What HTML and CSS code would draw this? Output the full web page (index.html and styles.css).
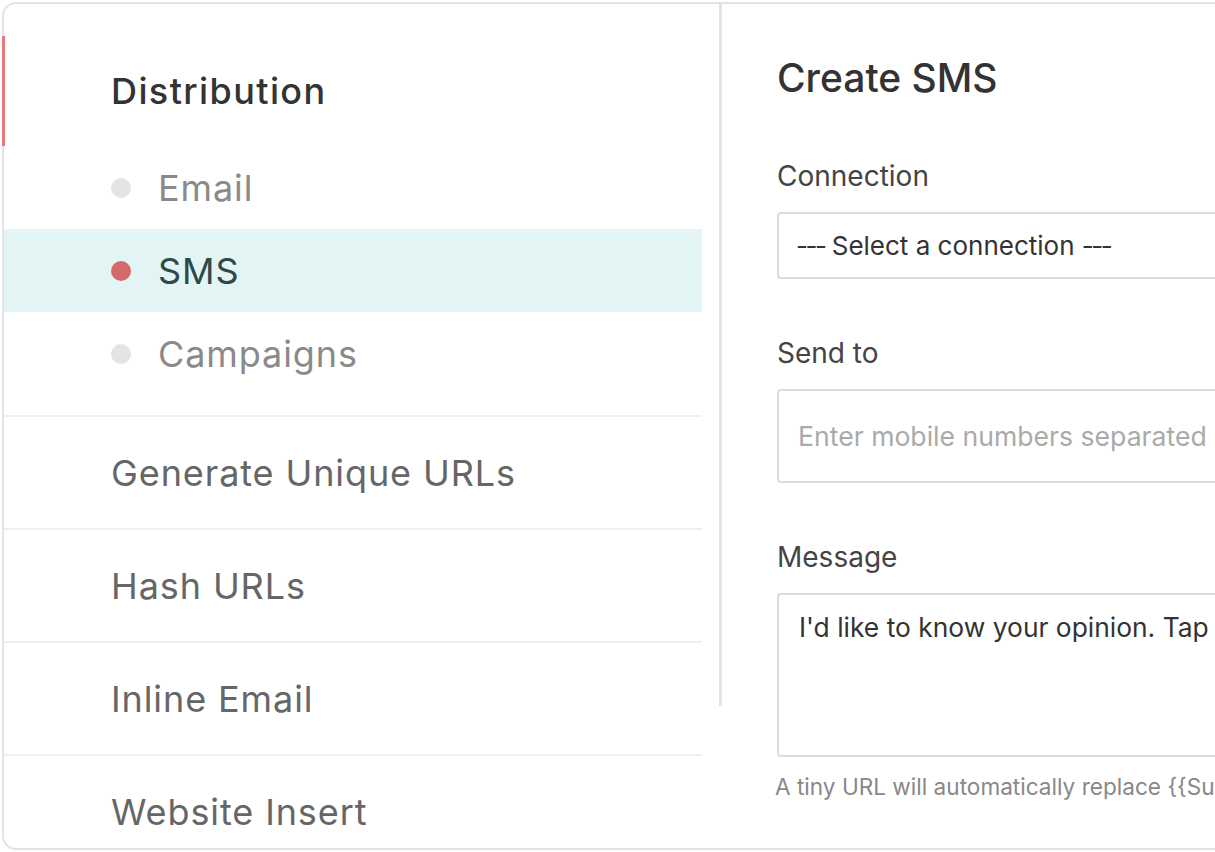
FILE: index.html
```html
<!DOCTYPE html>
<html lang="en">
<head>
  <meta charset="UTF-8" />
  <meta name="viewport" content="width=device-width, initial-scale=1" />
  <title>Create SMS - Distribution</title>
  <link rel="stylesheet" href="styles.css">
</head>
<body>
  <div class="frame">
    <nav class="sidebar">
      <div class="nav-head">Distribution</div>
      <ul class="sub-list">
        <li class="sub-item"><span class="dot"></span>Email</li>
        <li class="sub-item active"><span class="dot"></span>SMS</li>
        <li class="sub-item"><span class="dot"></span>Campaigns</li>
      </ul>
      <div class="nav-row">Generate Unique URLs</div>
      <div class="nav-row">Hash URLs</div>
      <div class="nav-row">Inline Email</div>
      <div class="nav-row">Website Insert</div>
    </nav>

    <main class="panel">
      <h1>Create SMS</h1>

      <label class="field-label" for="connection">Connection</label>
      <div class="select-box" id="connection"><span class="dashes">---</span> Select a connection <span class="dashes">---</span></div>

      <label class="field-label" for="sendTo">Send to</label>
      <input class="text-box" type="text" id="sendTo" placeholder="Enter mobile numbers separated by commas" />

      <label class="field-label" for="message">Message</label>
      <textarea class="message-box" id="message">I'd like to know your opinion. Tap the link below to take the survey.</textarea>
      <div class="hint">A tiny URL will automatically replace {{SurveyLink}} when the message is sent.</div>
    </main>
  </div>
</body>
</html>
```

FILE: styles.css
```css
body {
  margin: 0;
  overflow: hidden;
  font-family: Inter, "Noto Sans", sans-serif;
  background: white;
  color: #333;
}
.frame {
  display: flex;
  width: 1500px;
  height: 848px;
  box-sizing: border-box;
  margin: 2px 0 0 2px;
  border: 2px solid #e4e4e4;
  border-right: none;
  border-radius: 14px 0 0 14px;
}

/* sidebar */
.sidebar {
  width: 698px;
  flex-shrink: 0;
  padding-top: 32px;
}
.nav-head {
  height: 110px;
  display: flex;
  align-items: center;
  margin-left: -2px;
  padding-left: 106px;
  border-left: 3px solid #e8797d;
  font-size: 36px;
  font-weight: 500;
  letter-spacing: 1.4px;
  color: #333;
}
.sub-list {
  list-style: none;
  margin: 0;
  padding: 0 0 20px 0;
}
.sub-item {
  height: 83px;
  display: flex;
  align-items: center;
  padding-left: 107px;
  font-size: 36px;
  letter-spacing: 0.9px;
  color: #8a8a8a;
}
.sub-item .dot {
  width: 20px;
  height: 20px;
  border-radius: 50%;
  background: #e4e4e4;
  margin-right: 27px;
}
.sub-item.active {
  background: #e2f4f4;
  color: #2f4848;
}
.sub-item.active .dot {
  background: #d5686d;
}
.nav-row {
  height: 111px;
  display: flex;
  align-items: center;
  padding-left: 107px;
  border-top: 2px solid #efefef;
  font-size: 36px;
  letter-spacing: 0.9px;
  color: #666;
}

/* form panel */
.panel {
  align-self: flex-start;
  height: 702px;
  margin-left: 17px;
  border-left: 3px solid #e4e4e4;
  padding-left: 55px;
  flex-grow: 1;
}
h1 {
  margin: 50px 0 0 0;
  font-size: 39px;
  line-height: 48px;
  font-weight: 500;
  color: #333;
}
.field-label {
  display: block;
  margin-top: 57px;
  margin-bottom: 19px;
  font-size: 28px;
  line-height: 34px;
  color: #444;
}
.select-box,
.text-box,
.message-box {
  display: block;
  width: 700px;
  box-sizing: border-box;
  border: 2px solid #dcdcdc;
  border-radius: 4px;
  font-family: inherit;
  background: white;
  margin: 0;
}
.select-box {
  height: 67px;
  padding: 0 17px;
  display: flex;
  align-items: center;
  font-size: 26px;
  color: #333;
  white-space: pre;
}
.dashes {
  letter-spacing: -2.5px;
}
.text-box {
  height: 94px;
  padding: 0 19px;
  font-size: 26.6px;
  color: #333;
  outline: none;
}
.text-box::placeholder {
  color: #aaa;
}
.message-box {
  height: 164px;
  padding: 14px 20px;
  font-size: 26.4px;
  line-height: 36px;
  color: #333;
  resize: none;
  outline: none;
  white-space: nowrap;
  overflow: hidden;
}
.hint {
  margin-top: 16px;
  margin-left: -2px;
  font-size: 22.6px;
  line-height: 28px;
  color: #888;
  white-space: nowrap;
}
```
